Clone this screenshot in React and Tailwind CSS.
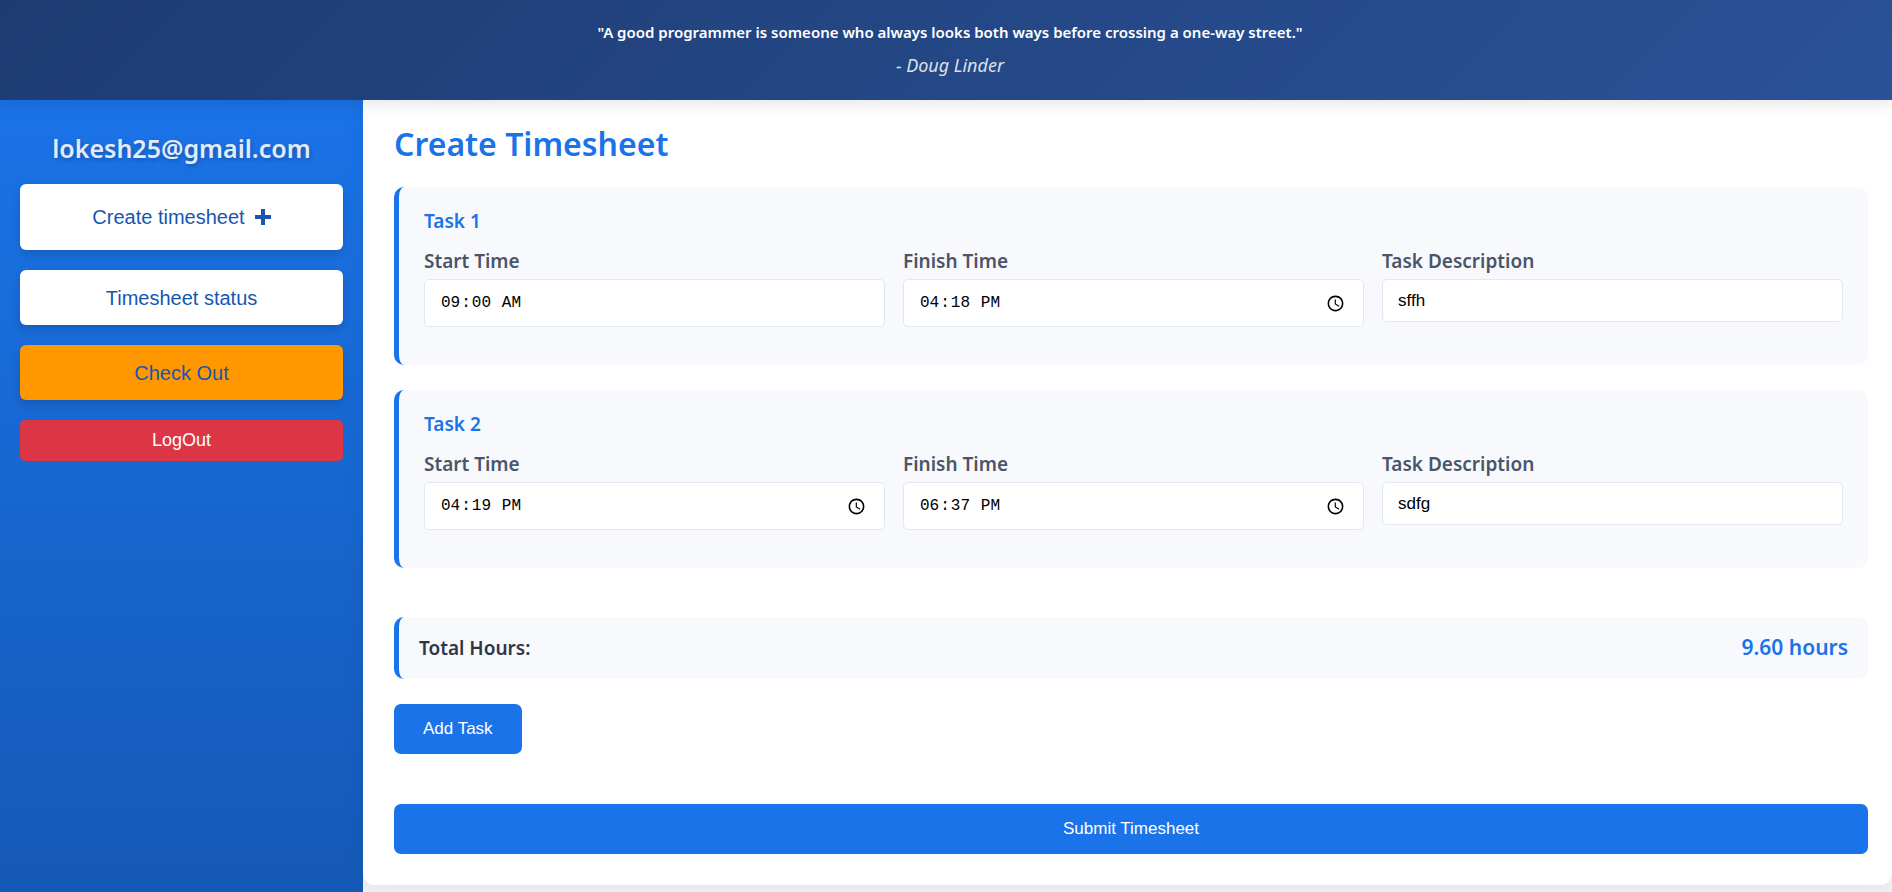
const tasks = [
  { id: 1, start: "09:00", finish: "16:18", description: "sffh", startFixed: true },
  { id: 2, start: "16:19", finish: "18:37", description: "sdfg", startFixed: false },
];

const labelClass = "text-[19px] leading-6 font-semibold text-[#4a5568]";
const timeClass =
  "h-12 w-full rounded-[5px] border border-[#e2e8f0] bg-white px-[15px] font-['Liberation_Mono',monospace] text-base text-black [&::-webkit-calendar-picker-indicator]:size-[19px] [&::-webkit-datetime-edit-ampm-field]:pl-[5px]";
const navClass =
  "w-full rounded-md text-center font-['Liberation_Sans',sans-serif] text-[20px] text-[#1656b0] shadow-[0_4px_10px_rgba(0,0,0,0.15)]";

function PlusIcon() {
  return (
    <svg viewBox="0 0 16 16" className="size-4" fill="currentColor" aria-hidden="true">
      <path d="M6 0h4v6h6v4h-6v6H6v-6H0V6h6z" />
    </svg>
  );
}

function TaskCard({ task }) {
  const prefix = `task-${task.id}`;
  return (
    <section className="rounded-[10px] border-l-[5px] border-[#1a73e8] bg-[#f8f9fd] px-[25px] pt-[22px] pb-[38px]">
      <h2 className="text-[19px] leading-6 font-semibold text-[#1a73e8]">Task {task.id}</h2>
      <div className="mt-4 grid grid-cols-3 items-start gap-[18px]">
        <div className="flex flex-col gap-[6px]">
          <label htmlFor={`${prefix}-start`} className={labelClass}>Start Time</label>
          <input
            id={`${prefix}-start`}
            type="time"
            defaultValue={task.start}
            readOnly={task.startFixed}
            className={
              task.startFixed
                ? `${timeClass} [&::-webkit-calendar-picker-indicator]:hidden`
                : timeClass
            }
          />
        </div>
        <div className="flex flex-col gap-[6px]">
          <label htmlFor={`${prefix}-finish`} className={labelClass}>Finish Time</label>
          <input id={`${prefix}-finish`} type="time" defaultValue={task.finish} className={timeClass} />
        </div>
        <div className="flex flex-col gap-[6px]">
          <label htmlFor={`${prefix}-description`} className={labelClass}>Task Description</label>
          <input
            id={`${prefix}-description`}
            type="text"
            defaultValue={task.description}
            className="h-[43px] w-full rounded-[5px] border border-[#e2e8f0] bg-white px-[15px] font-['Liberation_Sans',sans-serif] text-[17px] text-black"
          />
        </div>
      </div>
    </section>
  );
}

export default function App() {
  return (
    <div className="flex min-h-screen flex-col bg-[#f0f2f5] font-['Noto_Sans',sans-serif]">
      <header className="z-10 flex flex-col items-center gap-2 bg-linear-135 from-[#1e3c72] to-[#2a5298] pt-5 pr-5 pb-[22px] pl-7 text-center shadow-[0_4px_15px_rgba(0,0,0,0.1)]">
        <p className="text-[15px] leading-6 font-semibold text-white">
          "A good programmer is someone who always looks both ways before crossing a one-way street."
        </p>
        <p className="text-[18px] leading-[26px] text-[#dbe1ec] italic">- Doug Linder</p>
      </header>

      <div className="flex flex-1">
        <aside className="flex w-[363px] shrink-0 flex-col gap-5 bg-linear-to-b from-[#1a73e8] to-[#1559b7] px-5 pt-8">
          <p className="text-center text-[25px] leading-8 font-semibold text-[#e3eafc] [text-shadow:1px_2px_4px_rgba(0,0,0,0.25)]">
            lokesh25@gmail.com
          </p>
          <nav className="flex flex-col gap-5">
            <button type="button" className={`${navClass} flex h-[66px] items-center justify-center gap-[10px] bg-white`}>
              Create timesheet
              <PlusIcon />
            </button>
            <button type="button" className={`${navClass} h-[55px] bg-white`}>Timesheet status</button>
            <button type="button" className={`${navClass} h-[55px] bg-[#ff9800]`}>Check Out</button>
            <button
              type="button"
              className="h-[41px] w-full rounded-[5px] bg-[#dc3545] font-['Liberation_Sans',sans-serif] text-[18px] text-white"
            >
              LogOut
            </button>
          </nav>
        </aside>

        <main className="z-5 -mt-2 mb-[7px] flex min-w-0 flex-1 flex-col rounded-xl bg-white pt-8 pr-6 pb-[31px] pl-[31px] shadow-[0_4px_20px_rgba(0,0,0,0.06)]">
          <h1 className="text-[32px] leading-10 font-semibold text-[#1a73e8]">Create Timesheet</h1>
          <div className="mt-[23px] flex flex-col gap-[25px]">
            {tasks.map((task) => (
              <TaskCard key={task.id} task={task} />
            ))}
          </div>
          <div className="mt-[49px] flex h-[62px] items-center justify-between rounded-[10px] border-l-[5px] border-[#1a73e8] bg-[#f8f9fd] px-5">
            <span className="text-[19px] font-semibold text-[#2d3748]">Total Hours:</span>
            <span className="text-[21px] font-semibold text-[#1a73e8]">9.60 hours</span>
          </div>
          <button
            type="button"
            className="mt-[25px] h-[50px] self-start rounded-[7px] bg-[#1a73e8] px-[29px] font-['Liberation_Sans',sans-serif] text-[17px] text-white"
          >
            Add Task
          </button>
          <button
            type="submit"
            className="mt-[50px] h-[50px] w-full rounded-[7px] bg-[#1a73e8] font-['Liberation_Sans',sans-serif] text-[17px] text-white"
          >
            Submit Timesheet
          </button>
        </main>
      </div>
    </div>
  );
}
